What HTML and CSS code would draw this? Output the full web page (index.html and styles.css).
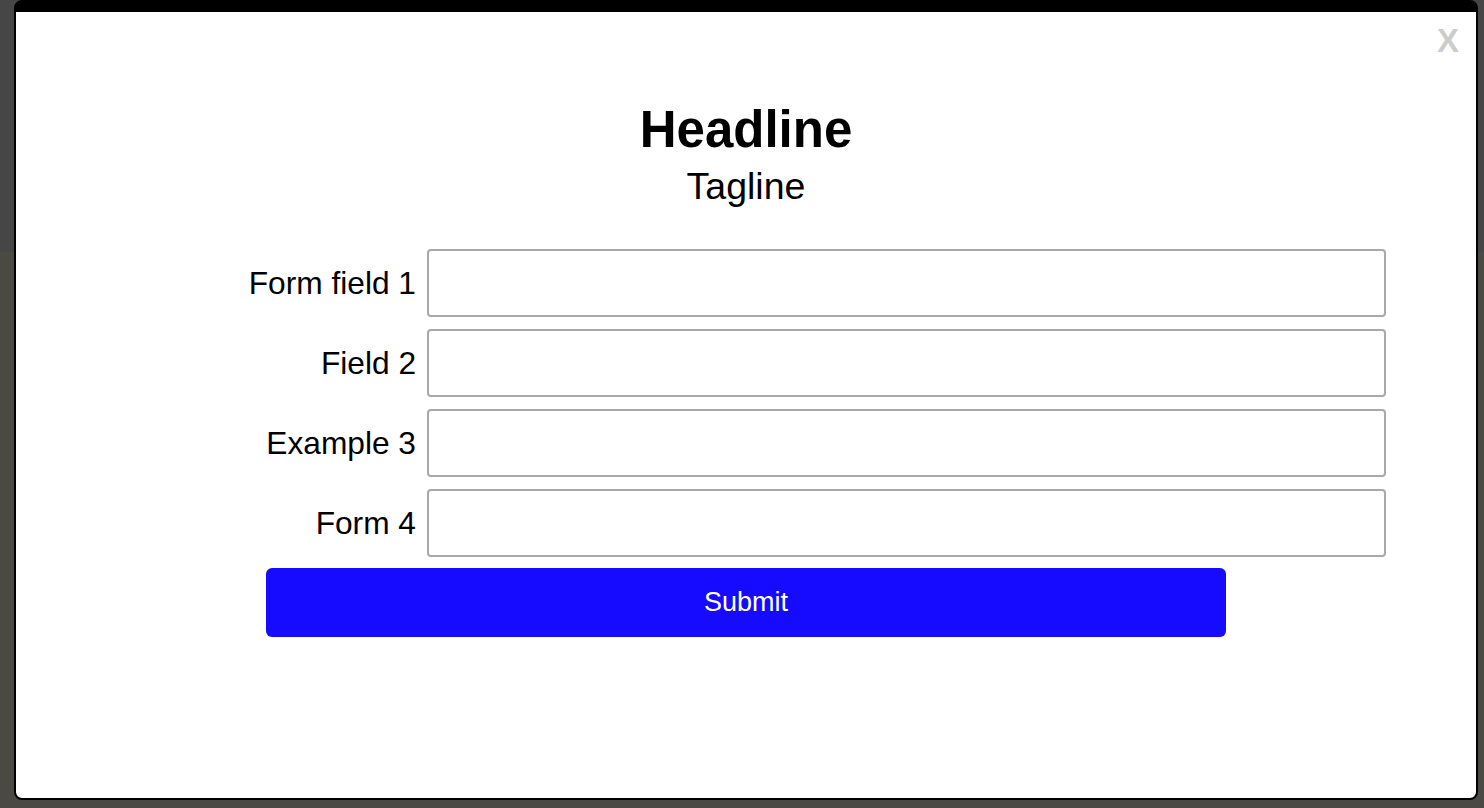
FILE: index.html
```html
<!DOCTYPE html>
<html lang="en">
<head>
<meta charset="utf-8">
<title>Modal form</title>
<link rel="stylesheet" href="styles.css">
</head>
<body>
<div class="modal">
  <span class="close">X</span>
  <h1 class="headline">Headline</h1>
  <p class="tagline">Tagline</p>
  <form class="form">
    <div class="row"><label class="label">Form field 1</label><input class="input" type="text"></div>
    <div class="row"><label class="label">Field 2</label><input class="input" type="text"></div>
    <div class="row"><label class="label">Example 3</label><input class="input" type="text"></div>
    <div class="row"><label class="label">Form 4</label><input class="input" type="text"></div>
    <button class="submit" type="button">Submit</button>
  </form>
</div>
</body>
</html>
```
FILE: styles.css
```css
html, body {
  margin: 0;
  padding: 0;
}
body {
  width: 1484px;
  height: 808px;
  overflow: hidden;
  background: linear-gradient(#464646 0, #464646 252px, #4a4944 252px, #4a4944 100%);
  font-family: "Liberation Sans", Arial, sans-serif;
  color: #000;
}
.modal {
  position: relative;
  box-sizing: border-box;
  margin-left: 14px;
  width: 1464px;
  height: 800px;
  background: #fff;
  border: 2px solid #000;
  border-top-width: 12px;
  border-radius: 8px;
  display: flex;
  flex-direction: column;
  align-items: center;
}
.close {
  position: absolute;
  top: 12px;
  right: 17px;
  font-size: 33px;
  line-height: 33px;
  font-weight: bold;
  color: #cccccc;
}
.headline {
  margin: 90px 0 0;
  font-size: 51px;
  line-height: 56px;
  font-weight: bold;
}
.tagline {
  margin: 7px 0 0;
  font-size: 37.5px;
  line-height: 42px;
}
.form {
  margin-top: 42px;
  width: 960px;
  display: flex;
  flex-direction: column;
  gap: 12px;
}
.row {
  display: flex;
  align-items: center;
  height: 68px;
}
.label {
  flex: none;
  width: 180px;
  margin-left: -30px;
  margin-right: 11px;
  text-align: right;
  font-size: 31.7px;
  white-space: nowrap;
}
.input {
  flex: none;
  box-sizing: border-box;
  width: 959px;
  height: 68px;
  margin: 0;
  border: 2px solid #a9a9a9;
  border-radius: 4px;
  background: #fff;
  font-family: inherit;
  font-size: 26px;
  padding: 0 10px;
}
.submit {
  box-sizing: border-box;
  margin-top: -1px;
  width: 960px;
  height: 69px;
  border: none;
  border-radius: 6px;
  background: #160bff;
  color: #fff;
  font-family: inherit;
  font-size: 27px;
  cursor: pointer;
}
```
